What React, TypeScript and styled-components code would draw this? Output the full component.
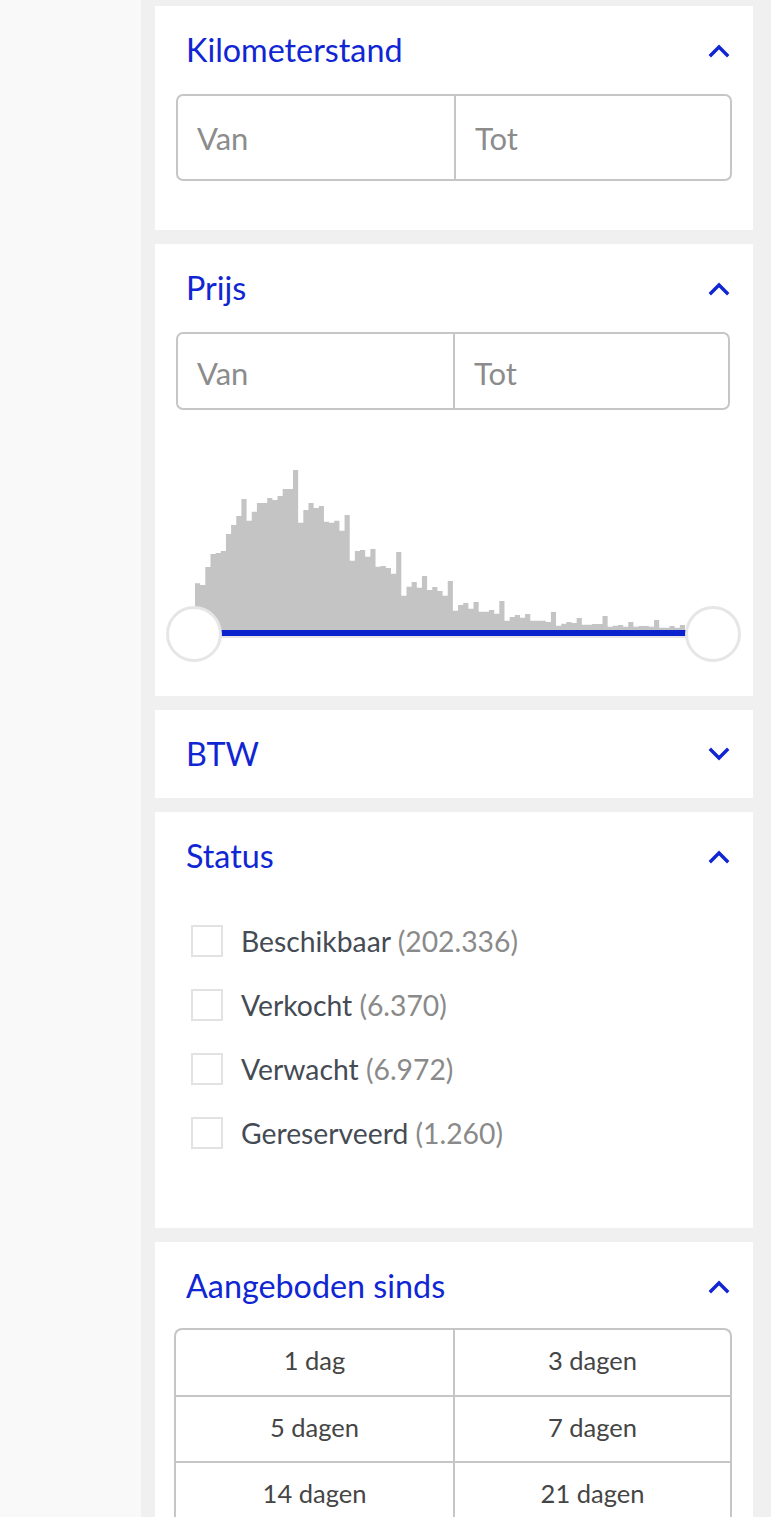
import React from "react";
import styled, { createGlobalStyle } from "styled-components";

const Global = createGlobalStyle`
  html, body { margin: 0; padding: 0; background: #f9f9f9; }
  body { font-family: Lato, "Open Sans", sans-serif; }
  * { box-sizing: border-box; }
`;

const BLUE = "#1026d3";

const Page = styled.div`
  display: flex;
  min-height: 1517px;
`;

const Gutter = styled.div`
  width: 141px;
  flex: none;
  background: #f9f9f9;
`;

const Sidebar = styled.aside`
  flex: 1;
  background: #f0f0f0;
  padding: 6px 18px 0 14px;
  display: flex;
  flex-direction: column;
  gap: 14px;
`;

const Card = styled.section<{ $pb?: number }>`
  background: #fff;
  padding-bottom: ${(p) => p.$pb ?? 0}px;
`;

const Header = styled.div`
  height: 88px;
  display: flex;
  align-items: center;
  justify-content: space-between;
  padding: 0 23px 0 31px;
`;

const Title = styled.h2`
  margin: 0;
  font-weight: 400;
  font-size: 32.3px;
  color: ${BLUE};
  line-height: 1.2;
`;

const Chevron = ({ up }: { up: boolean }) => (
  <svg width="22" height="15" viewBox="0 0 22 15">
    <polyline
      points={up ? "3,12 11,4 19,12" : "3,3 11,11 19,3"}
      fill="none"
      stroke={BLUE}
      strokeWidth="3.4"
      strokeLinecap="square"
    />
  </svg>
);

const RangeInputs = styled.div<{ $h: number; $mr: number }>`
  margin: 0 ${(p) => p.$mr}px 0 21px;
  height: ${(p) => p.$h}px;
  border: 2px solid #c6c6c6;
  border-radius: 7px;
  display: grid;
  grid-template-columns: 1fr 1fr;
  overflow: hidden;
`;

const RangeField = styled.div<{ $shift?: number }>`
  display: flex;
  align-items: center;
  padding-left: 19px;
  padding-top: ${(p) => p.$shift ?? 0}px;
  font-size: 31px;
  color: #8c8c8c;
  & + & {
    border-left: 2px solid #c6c6c6;
  }
`;

const SliderArea = styled.div`
  position: relative;
  margin: 58px 12px 0 11px;
  padding-bottom: 24px;
`;

const Histogram = styled.svg`
  display: block;
  margin-left: 29px;
  width: 490px;
  height: 162px;
`;

const Track = styled.div`
  margin: 0 28px;
  height: 8px;
  border-top: 6px solid #0b22cf;
  border-bottom: 2px solid #e6e6e6;
`;

const Handle = styled.div<{ $side: "left" | "right" }>`
  position: absolute;
  bottom: 0;
  ${(p) => p.$side}: 0;
  width: 56px;
  height: 56px;
  border-radius: 50%;
  background: #fff;
  border: 3px solid #e6e6e6;
`;

const CheckList = styled.ul`
  list-style: none;
  margin: 0;
  padding: 25px 0 0 36px;
  display: flex;
  flex-direction: column;
  gap: 32px;
`;

const CheckRow = styled.li`
  display: flex;
  align-items: center;
  height: 32px;
  gap: 18px;
  font-size: 28.3px;
  color: #454b54;
`;

const Box = styled.span`
  width: 32px;
  height: 32px;
  border: 2px solid #e2e2e2;
  flex: none;
`;

const Count = styled.span`
  color: #8a8a8a;
`;

const PeriodGrid = styled.div`
  margin: -2px 21px 0 19px;
  border: 2px solid #c6c6c6;
  border-bottom: none;
  border-radius: 8px 8px 0 0;
  display: grid;
  grid-template-columns: 1fr 1fr;
  overflow: hidden;
`;

const PeriodCell = styled.div<{ $col: number; $row: number }>`
  height: ${(p) => (p.$row > 0 ? 66 : 65)}px;
  display: flex;
  align-items: center;
  justify-content: center;
  padding-bottom: 5px;
  font-size: 25.5px;
  color: #454545;
  border-left: ${(p) => (p.$col === 1 ? "2px solid #c6c6c6" : "none")};
  border-top: ${(p) => (p.$row > 0 ? "2px solid #c6c6c6" : "none")};
`;

const tops = [
  430, 435, 381, 342, 339, 333, 282, 255, 228, 177, 242, 215, 189, 189, 174,
  180, 168, 147, 147, 90, 248, 210, 189, 204, 198, 245, 248, 242, 272, 225,
  362, 333, 330, 350, 327, 380, 378, 384, 401, 336, 467, 440, 426, 443, 408,
  450, 441, 453, 467, 423, 512, 495, 489, 506, 486, 515, 515, 510, 521, 483,
  542, 531, 525, 533, 522, 542, 542, 542, 546, 516, 557, 551, 546, 549, 534,
  554, 554, 552, 552, 528, 560, 557, 555, 560, 546, 560, 558, 558, 560, 540,
  563, 563, 558, 563, 555,
];

const H = 162;
const heights = tops.map((t) => (570 - t) / 3);
const histPath = (() => {
  let d = `M0,${H}`;
  heights.forEach((h, i) => {
    const y = (H - h).toFixed(2);
    d += ` L${i},${y} L${i + 1},${y}`;
  });
  d += ` L${heights.length},${H} Z`;
  return d;
})();

const statuses = [
  ["Beschikbaar", "202.336"],
  ["Verkocht", "6.370"],
  ["Verwacht", "6.972"],
  ["Gereserveerd", "1.260"],
];

const periods = ["1 dag", "3 dagen", "5 dagen", "7 dagen", "14 dagen", "21 dagen"];

export default function App() {
  return (
    <>
      <Global />
      <Page>
        <Gutter />
        <Sidebar>
          <Card $pb={49}>
            <Header>
              <Title>Kilometerstand</Title>
              <Chevron up />
            </Header>
            <RangeInputs $h={87} $mr={21}>
              <RangeField>Van</RangeField>
              <RangeField>Tot</RangeField>
            </RangeInputs>
          </Card>

          <Card $pb={34}>
            <Header>
              <Title>Prijs</Title>
              <Chevron up />
            </Header>
            <RangeInputs $h={78} $mr={23}>
              <RangeField $shift={4}>Van</RangeField>
              <RangeField $shift={4}>Tot</RangeField>
            </RangeInputs>
            <SliderArea>
              <Histogram viewBox={`0 0 ${heights.length} ${H}`} preserveAspectRatio="none">
                <path d={histPath} fill="#c4c4c4" />
              </Histogram>
              <Track />
              <Handle $side="left" />
              <Handle $side="right" />
            </SliderArea>
          </Card>

          <Card>
            <Header>
              <Title>BTW</Title>
              <Chevron up={false} />
            </Header>
          </Card>

          <Card $pb={79}>
            <Header>
              <Title>Status</Title>
              <Chevron up />
            </Header>
            <CheckList>
              {statuses.map(([label, count]) => (
                <CheckRow key={label}>
                  <Box />
                  <span>
                    {label} <Count>({count})</Count>
                  </span>
                </CheckRow>
              ))}
            </CheckList>
          </Card>

          <Card>
            <Header>
              <Title>Aangeboden sinds</Title>
              <Chevron up />
            </Header>
            <PeriodGrid>
              {periods.map((p, i) => (
                <PeriodCell key={p} $col={i % 2} $row={Math.floor(i / 2)}>
                  {p}
                </PeriodCell>
              ))}
            </PeriodGrid>
          </Card>
        </Sidebar>
      </Page>
    </>
  );
}
